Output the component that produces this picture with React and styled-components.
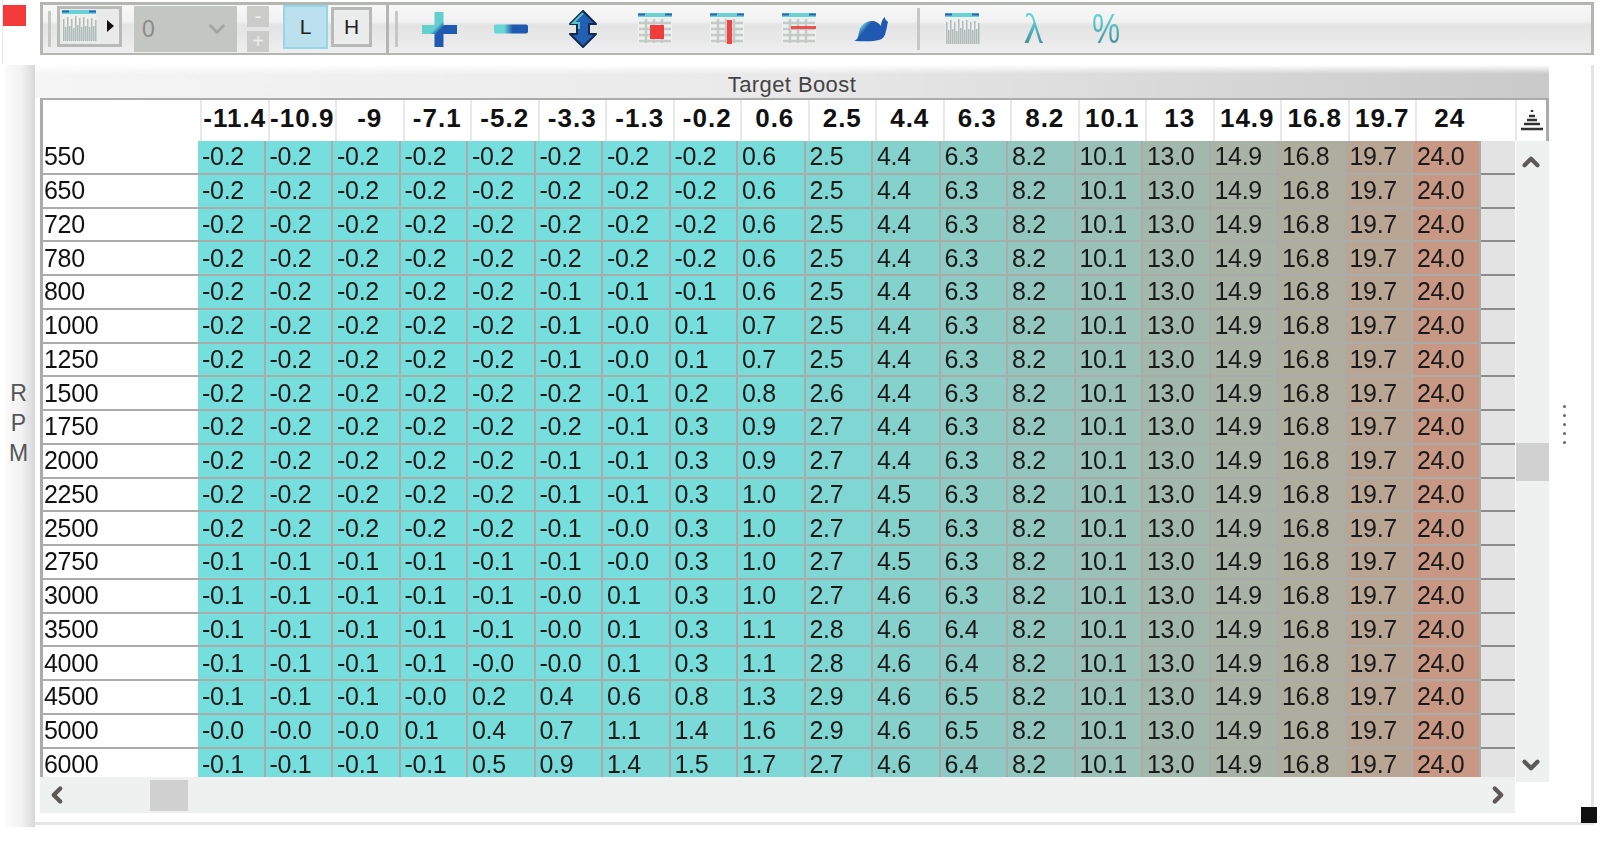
import React from "react";
import styled, { createGlobalStyle } from "styled-components";
import { ChevronDown, ChevronUp, ChevronLeft, ChevronRight } from "lucide-react";

const gridLine = "#aaacaa";
const axis = ["-11.4", "-10.9", "-9", "-7.1", "-5.2", "-3.3", "-1.3", "-0.2", "0.6", "2.5", "4.4", "6.3", "8.2", "10.1", "13", "14.9", "16.8", "19.7", "24"];
const tail = ["8.2", "10.1", "13.0", "14.9", "16.8", "19.7", "24.0"];
const rep = (value, count) => Array(count).fill(value);

const rows = [
  ["550", [...rep("-0.2", 8), "0.6", "2.5", "4.4", "6.3"]],
  ["650", [...rep("-0.2", 8), "0.6", "2.5", "4.4", "6.3"]],
  ["720", [...rep("-0.2", 8), "0.6", "2.5", "4.4", "6.3"]],
  ["780", [...rep("-0.2", 8), "0.6", "2.5", "4.4", "6.3"]],
  ["800", [...rep("-0.2", 5), "-0.1", "-0.1", "-0.1", "0.6", "2.5", "4.4", "6.3"]],
  ["1000", [...rep("-0.2", 5), "-0.1", "-0.0", "0.1", "0.7", "2.5", "4.4", "6.3"]],
  ["1250", [...rep("-0.2", 5), "-0.1", "-0.0", "0.1", "0.7", "2.5", "4.4", "6.3"]],
  ["1500", [...rep("-0.2", 5), "-0.2", "-0.1", "0.2", "0.8", "2.6", "4.4", "6.3"]],
  ["1750", [...rep("-0.2", 5), "-0.2", "-0.1", "0.3", "0.9", "2.7", "4.4", "6.3"]],
  ["2000", [...rep("-0.2", 5), "-0.1", "-0.1", "0.3", "0.9", "2.7", "4.4", "6.3"]],
  ["2250", [...rep("-0.2", 5), "-0.1", "-0.1", "0.3", "1.0", "2.7", "4.5", "6.3"]],
  ["2500", [...rep("-0.2", 5), "-0.1", "-0.0", "0.3", "1.0", "2.7", "4.5", "6.3"]],
  ["2750", [...rep("-0.1", 6), "-0.0", "0.3", "1.0", "2.7", "4.5", "6.3"]],
  ["3000", [...rep("-0.1", 5), "-0.0", "0.1", "0.3", "1.0", "2.7", "4.6", "6.3"]],
  ["3500", [...rep("-0.1", 5), "-0.0", "0.1", "0.3", "1.1", "2.8", "4.6", "6.4"]],
  ["4000", [...rep("-0.1", 4), "-0.0", "-0.0", "0.1", "0.3", "1.1", "2.8", "4.6", "6.4"]],
  ["4500", [...rep("-0.1", 3), "-0.0", "0.2", "0.4", "0.6", "0.8", "1.3", "2.9", "4.6", "6.5"]],
  ["5000", [...rep("-0.0", 3), "0.1", "0.4", "0.7", "1.1", "1.4", "1.6", "2.9", "4.6", "6.5"]],
  ["6000", [...rep("-0.1", 4), "0.5", "0.9", "1.4", "1.5", "1.7", "2.7", "4.6", "6.4"]],
];

// teal at zero up to salmon at the top of the map
const cellColor = text => {
  const t = Math.max(0, parseFloat(text) / 24);
  const mix = (a, b) => Math.round(a + (b - a) * t);
  return `rgb(${mix(118, 200)}, ${mix(222, 152)}, ${mix(220, 132)})`;
};

const spikes = [10, 18, 8, 17, 10, 19, 7, 16, 9, 18, 8, 17, 10, 18, 9, 17, 11];

const TableIcon = ({ mark }) => (
  <svg width="36" height="34" viewBox="0 0 36 34">
    <rect x="1" y="3" width="34" height="29" fill="#eef0ee" />
    <rect x="1" y="1" width="34" height="4" fill="#6ad2d4" />
    <rect x="1" y="1.500" width="7" height="2" fill="#2a62b5" />
    <rect x="28" y="1.500" width="7" height="2" fill="#2a62b5" />
    {mark === "spikes" ? (
      spikes.map((top, i) => (
        <rect key={i} x={2 + i * 2} y={top} width="1.500" height={32 - top} fill="#aebab7" />
      ))
    ) : (
      <path d="M2 11h32M2 17h32M2 23h32M2 29h32M9 7v24M17 7v24M25 7v24" stroke="#c4cac7" strokeWidth="2.500" fill="none" />
    )}
    {mark === "cell" && <rect x="13" y="13" width="14" height="14" fill="#f23b3b" />}
    {mark === "column" && <rect x="18" y="8" width="5" height="24" fill="#f04343" />}
    {mark === "row" && <rect x="10" y="14" width="25" height="3" fill="#ee5050" />}
  </svg>
);

const PlusIcon = () => (
  <svg width="36" height="36" viewBox="0 0 36 36">
    <defs>
      <linearGradient id="plusFill" x1="0" y1="0" x2="1" y2="1">
        <stop offset="0.42" stopColor="#62d0cf" />
        <stop offset="0.52" stopColor="#2059b0" />
      </linearGradient>
    </defs>
    <path d="M13.500 1h9v13H36v9H22.500v13h-9V23H1v-9h12.500z" fill="url(#plusFill)" />
  </svg>
);

const MinusIcon = () => (
  <svg width="36" height="12" viewBox="0 0 36 12">
    <defs>
      <linearGradient id="minusFill" x1="0" y1="0" x2="1" y2="0">
        <stop offset="0.3" stopColor="#68d6d6" />
        <stop offset="0.55" stopColor="#2059b0" />
      </linearGradient>
    </defs>
    <rect x="1" y="1.500" width="34" height="9" rx="2" fill="url(#minusFill)" />
  </svg>
);

const UpDownIcon = () => (
  <svg width="30" height="38" viewBox="0 0 30 38">
    <path d="M15 1L28 14h-7v10h7L15 37 2 24h7V14H2z" fill="#2260b3" stroke="#15294f" strokeWidth="2" strokeLinejoin="round" />
    <path d="M15 3L5 13h6v6" fill="none" stroke="#5ac4c4" strokeWidth="2" />
  </svg>
);

const SnailIcon = () => (
  <svg width="36" height="26" viewBox="0 0 36 26">
    <defs>
      <linearGradient id="snailFill" x1="0" y1="0" x2="1" y2="0.6">
        <stop offset="0.32" stopColor="#62cbc9" />
        <stop offset="0.48" stopColor="#2059b0" />
      </linearGradient>
    </defs>
    <path d="M1 25c3-1 4-3 5-9 1-7 7-11 13-11 4 0 7 2 9 5 0-3 1-7 4-9 0 3 1 3 3 5-1 3-1 6-2 9-1 5-3 8-7 9-7 2-17 1-25 1z" fill="url(#snailFill)" />
  </svg>
);

const SortIcon = () => (
  <svg width="24" height="22" viewBox="0 0 24 22">
    <path d="M12 1v2M9 7h6M7 11h10M4 15h16M1 20h22" stroke="#333" strokeWidth="2.500" fill="none" />
  </svg>
);

export default function App() {
  return (
    <Page>
      <GlobalStyle />
      <TopRow>
        <Corner>
          <RedFlag />
        </Corner>
        <Toolbar>
          <ToolGroup>
            <Grip $left={5} />
            <MenuButton>
              <TableIcon mark="spikes" />
              <MenuCaret />
            </MenuButton>
            <Combo>
              0
              <ChevronDown size={26} color="#a3a5a3" strokeWidth={2.5} />
            </Combo>
            <Spin>
              <SpinPart>-</SpinPart>
              <SpinPart>+</SpinPart>
            </Spin>
            <RangeButton $active>L</RangeButton>
            <RangeButton>H</RangeButton>
          </ToolGroup>
          <Grip $left={6} />
          <ToolIcons>
            <ToolIcon><PlusIcon /></ToolIcon>
            <ToolIcon><MinusIcon /></ToolIcon>
            <ToolIcon><UpDownIcon /></ToolIcon>
            <ToolIcon><TableIcon mark="cell" /></ToolIcon>
            <ToolIcon><TableIcon mark="column" /></ToolIcon>
            <ToolIcon><TableIcon mark="row" /></ToolIcon>
            <ToolIcon><SnailIcon /></ToolIcon>
            <ToolDivider />
            <ToolIcon><TableIcon mark="spikes" /></ToolIcon>
            <ToolIcon><Glyph $family="Liberation Serif" $scaleX={1.15}>λ</Glyph></ToolIcon>
            <ToolIcon><Glyph $family="Liberation Sans" $scaleX={0.88}>%</Glyph></ToolIcon>
          </ToolIcons>
        </Toolbar>
      </TopRow>
      <Body>
        <Gutter>
          <span>R</span>
          <span>P</span>
          <span>M</span>
        </Gutter>
        <Frame>
          <Panel>
            <TitleBar>Target Boost</TitleBar>
            <TableWrap>
              <HeaderRow>
                <span />
                {axis.map((label, i) => (
                  <HeaderCell key={i}>{label}</HeaderCell>
                ))}
                <span />
                <SortCell>
                  <SortIcon />
                </SortCell>
              </HeaderRow>
              <TableBody>
                <RowsColumn>
                  <RowsViewport>
                    {rows.map(([rpm, values]) => (
                      <Row key={rpm}>
                        <RowLabel>{rpm}</RowLabel>
                        {[...values, ...tail].map((value, i) => (
                          <Cell key={i} style={{ background: cellColor(value) }}>
                            {value}
                          </Cell>
                        ))}
                        <SpareCell />
                      </Row>
                    ))}
                  </RowsViewport>
                  <HScroll>
                    <ChevronLeft size={26} color="#5e5a58" strokeWidth={4} />
                    <HThumb />
                    <ChevronRight size={26} color="#5e5a58" strokeWidth={4} />
                  </HScroll>
                </RowsColumn>
                <VScroll>
                  <ChevronUp size={26} color="#5e5a58" strokeWidth={4} />
                  <VThumb />
                  <ChevronDown size={26} color="#5e5a58" strokeWidth={4} />
                </VScroll>
              </TableBody>
            </TableWrap>
          </Panel>
          <Sash>
            <SashDot />
            <SashDot />
            <SashDot />
            <SashDot />
            <SashDot />
          </Sash>
          <ResizeHandle />
        </Frame>
      </Body>
    </Page>
  );
}

const GlobalStyle = createGlobalStyle`
  body {
    margin: 0;
    background: #fff;
    font-family: "Liberation Sans", Arial, sans-serif;
  }
`;

const Page = styled.div`
  width: 1615px;
  height: 850px;
  overflow: hidden;
  filter: blur(0.45px);
`;

const TopRow = styled.div`
  display: flex;
  height: 65px;
`;

const Corner = styled.div`
  width: 40px;
  height: 64px;
  padding-top: 5px;
  margin-left: 2px;
  margin-right: -2px;
  box-sizing: border-box;
  border-left: 1px solid #e6e6e6;
`;

const RedFlag = styled.div`
  width: 23px;
  height: 21px;
  background: #f53a3b;
`;

const Toolbar = styled.div`
  width: 1554px;
  height: 53px;
  margin-top: 2px;
  box-sizing: border-box;
  display: flex;
  align-items: center;
  border: 3px solid #b4b6b2;
  border-bottom-width: 2px;
  background: linear-gradient(#f7f8f7 0%, #f0f1f0 35%, #e2e3e2 42%, #eeefee 100%);
`;

const ToolGroup = styled.div`
  width: 346px;
  height: 100%;
  flex: none;
  box-sizing: border-box;
  display: flex;
  align-items: center;
  border-right: 3px solid #b4b6b2;
`;

const Grip = styled.div`
  width: 3px;
  height: 36px;
  flex: none;
  margin-left: ${({ $left }) => $left}px;
  background: #c6c8c6;
`;

const MenuButton = styled.div`
  width: 65px;
  height: 41px;
  margin: 0 0 6px 6px;
  flex: none;
  box-sizing: border-box;
  display: flex;
  align-items: center;
  gap: 10px;
  padding-left: 1px;
  border: 3px solid #b8bab7;
  background: #e9eae9;
`;

const MenuCaret = styled.div`
  width: 0;
  height: 0;
  border-left: 7px solid #111;
  border-top: 6px solid transparent;
  border-bottom: 6px solid transparent;
`;

const Combo = styled.div`
  width: 103px;
  height: 46px;
  margin-left: 12px;
  flex: none;
  box-sizing: border-box;
  display: flex;
  align-items: center;
  justify-content: space-between;
  padding: 0 7px 0 8px;
  background: #c4c6c4;
  color: #8a8c8a;
  font-size: 23px;
`;

const Spin = styled.div`
  margin-left: 10px;
  flex: none;
  display: flex;
  flex-direction: column;
  gap: 4px;
`;

const SpinPart = styled.div`
  width: 22px;
  height: 21px;
  display: flex;
  align-items: center;
  justify-content: center;
  background: #cbccca;
  color: #eeeeee;
  font-size: 20px;
`;

const RangeButton = styled.div`
  width: ${({ $active }) => ($active ? 45 : 41)}px;
  height: ${({ $active }) => ($active ? 44 : 40)}px;
  margin-left: ${({ $active }) => ($active ? 14 : 3)}px;
  margin-bottom: 4px;
  flex: none;
  box-sizing: border-box;
  display: flex;
  align-items: center;
  justify-content: center;
  border: ${({ $active }) => ($active ? "2px solid #95d7e6" : "3px solid #b8bab7")};
  background: ${({ $active }) => ($active ? "#bbe0ee" : "#ebecec")};
  color: #222;
  font-size: 21px;
`;

const ToolIcons = styled.div`
  display: flex;
  align-items: center;
  height: 100%;
  margin-left: 5px;
`;

const ToolIcon = styled.div`
  width: 72px;
  flex: none;
  display: flex;
  align-items: center;
  justify-content: center;
`;

const ToolDivider = styled.div`
  width: 3px;
  height: 42px;
  margin: 0 6px 0 10px;
  flex: none;
  background: #c6c8c6;
`;

const Glyph = styled.span`
  display: inline-block;
  font-family: "${({ $family }) => $family}", sans-serif;
  font-size: 36px;
  line-height: 42px;
  transform: scale(${({ $scaleX }) => $scaleX}, 1.2);
  background: linear-gradient(#5fd0d4 30%, #2f7480 100%);
  -webkit-background-clip: text;
  background-clip: text;
  color: transparent;
`;

const Body = styled.div`
  display: flex;
  padding-left: 5px;
  height: 762px;
`;

const Gutter = styled.div`
  width: 30px;
  flex: none;
  box-sizing: border-box;
  display: flex;
  flex-direction: column;
  align-items: center;
  justify-content: center;
  padding: 0 3px 46px 0;
  background: linear-gradient(90deg, #fbfbfb, #f1f2f1 55%, #d6d7d6);
  color: #555;
  font-size: 23px;
  line-height: 30px;
`;

const Frame = styled.div`
  position: relative;
  width: 1559px;
  height: 760px;
  flex: none;
  box-sizing: border-box;
  display: flex;
  border-right: 3px solid #e3e4e3;
  border-bottom: 3px solid #e3e4e3;
`;

const Panel = styled.div`
  width: 1514px;
  flex: none;
`;

const TitleBar = styled.div`
  height: 33px;
  display: flex;
  align-items: center;
  justify-content: center;
  padding-top: 6px;
  box-sizing: border-box;
  background: linear-gradient(#ffffff, rgba(255, 255, 255, 0) 9px),
    linear-gradient(90deg, #f4f5f4, #e8e9e8 50%, #c8c9c8);
  color: #444;
  font-size: 22px;
  letter-spacing: 0.4px;
`;

const TableWrap = styled.div`
  padding-left: 5px;
`;

const HeaderRow = styled.div`
  height: 43px;
  box-sizing: border-box;
  display: grid;
  grid-template-columns: 157px repeat(19, 67.5px) 32.5px 1fr;
  border-top: 2px solid ${gridLine};
  border-left: 3px solid ${gridLine};
  background: #fff;
`;

const HeaderCell = styled.div`
  display: flex;
  align-items: center;
  justify-content: center;
  padding-bottom: 5px;
  border-left: 2px solid #e8e8e8;
  color: #111;
  font-size: 26px;
  font-weight: bold;
  letter-spacing: 1px;
  white-space: nowrap;
`;

const SortCell = styled.div`
  display: flex;
  align-items: center;
  justify-content: center;
  padding-bottom: 2px;
  border-left: 2px solid #e8e8e8;
  border-right: 3px solid ${gridLine};
`;

const TableBody = styled.div`
  display: flex;
  align-items: flex-start;
  gap: 1px;
`;

const RowsColumn = styled.div`
  width: 1475px;
  flex: none;
`;

const RowsViewport = styled.div`
  height: 636px;
  overflow: hidden;
`;

const Row = styled.div`
  height: 33.75px;
  display: grid;
  grid-template-columns: 158px repeat(19, 67.5px) 1fr;
`;

const RowLabel = styled.div`
  box-sizing: border-box;
  display: flex;
  align-items: center;
  padding-left: 1px;
  border-left: 3px solid ${gridLine};
  border-bottom: 2px solid ${gridLine};
  background: #fff;
  color: #111;
  font-size: 25px;
  letter-spacing: -0.3px;
`;

const Cell = styled.div`
  box-sizing: border-box;
  display: flex;
  align-items: center;
  padding-left: 4px;
  border-right: 2px solid ${gridLine};
  border-bottom: 2px solid ${gridLine};
  color: #1a1a1a;
  font-size: 25px;
  letter-spacing: -0.3px;
  white-space: nowrap;
`;

const SpareCell = styled.div`
  box-sizing: border-box;
  border-bottom: 2px solid #8a8c8a;
  background: #e2e3e2;
`;

const HScroll = styled.div`
  height: 36px;
  display: flex;
  align-items: center;
  padding: 0 4px 0 4px;
  background: #eff1f0;
`;

const HThumb = styled.div`
  width: 38px;
  height: 31px;
  margin: 0 auto 0 80px;
  background: #cfd0cf;
`;

const VScroll = styled.div`
  width: 33px;
  height: 641px;
  flex: none;
  display: flex;
  flex-direction: column;
  align-items: center;
  padding: 8px 4px 4px 0;
  box-sizing: border-box;
  background: #eff1f0;
`;

const VThumb = styled.div`
  width: 33px;
  height: 38px;
  margin: 268px -4px auto 0;
  background: #d0d1d0;
`;

const Sash = styled.div`
  flex: 1;
  display: flex;
  flex-direction: column;
  align-items: center;
  gap: 6px;
  padding: 340px 11px 0 0;
`;

const SashDot = styled.div`
  width: 3px;
  height: 3px;
  border-radius: 50%;
  background: #666;
`;

const ResizeHandle = styled.div`
  position: absolute;
  right: -6px;
  bottom: -1px;
  width: 16px;
  height: 16px;
  background: #111;
`;
